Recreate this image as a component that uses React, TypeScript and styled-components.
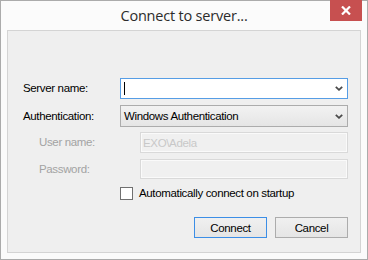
import React from "react";
import styled, { createGlobalStyle } from "styled-components";

const Global = createGlobalStyle`
  html, body { margin: 0; padding: 0; background: #ffffff; }
  * { box-sizing: border-box; }
`;

const Window = styled.div`
  width: 368px;
  height: 260px;
  border: 1px solid #ababab;
  background: #fbfbfb;
  display: flex;
  flex-direction: column;
  font-family: "Liberation Sans", Arial, sans-serif;
  font-size: 11.5px;
  letter-spacing: -0.35px;
  color: #000;
`;

const TitleBar = styled.div`
  height: 29px;
  display: grid;
  grid-template-columns: 1fr auto 1fr;
  align-items: start;
`;

const Title = styled.div`
  grid-column: 2;
  font-family: "Open Sans", "Noto Sans", sans-serif;
  font-size: 14.5px;
  letter-spacing: -0.2px;
  color: #2b2b2b;
  padding-top: 5px;
  line-height: 20px;
`;

const CloseButton = styled.div`
  grid-column: 3;
  justify-self: end;
  margin-right: 5px;
  margin-top: -1px;
  width: 32px;
  height: 21px;
  background: #c75050;
  display: flex;
  align-items: center;
  justify-content: center;
`;

const Panel = styled.div`
  margin: 0 6px 6px 6px;
  flex: 1;
  border: 1px solid #d4d4d4;
  background: #efefef;
  padding: 47px 12px 0 15px;
  display: flex;
  flex-direction: column;
`;

const Row = styled.div<{ $h: number; $mt?: number }>`
  display: flex;
  align-items: center;
  height: ${(p) => p.$h}px;
  margin-top: ${(p) => p.$mt ?? 0}px;
`;

const Label = styled.div<{ $disabled?: boolean }>`
  width: ${(p) => (p.$disabled ? 101 : 97)}px;
  padding-left: ${(p) => (p.$disabled ? 16 : 0)}px;
  color: ${(p) => (p.$disabled ? "#a3a3a3" : "#000")};
  margin-top: -1px;
`;

const TextInput = styled.div<{ $disabled?: boolean; $focused?: boolean }>`
  flex: 1;
  height: 100%;
  margin-left: ${(p) => (p.$disabled ? 16 : 0)}px;
  border: 1px solid
    ${(p) => (p.$focused ? "#569de5" : p.$disabled ? "#d9d9d9" : "#abadb3")};
  background: ${(p) => (p.$disabled ? "#f0f0f0" : "#ffffff")};
  box-shadow: ${(p) => (p.$disabled ? "inset 0 0 0 1px #fafafa" : "none")};
  display: flex;
  align-items: center;
  padding: 0 4px 0 2px;
  color: #c8c8c8;
`;

const Caret = styled.span`
  display: block;
  width: 1px;
  height: 13px;
  background: #000;
  margin-left: 1px;
`;

const Spacer = styled.span`
  flex: 1;
`;

const Combo = styled.div`
  flex: 1;
  height: 100%;
  border: 1px solid #acacac;
  background: linear-gradient(#f2f2f2, #e5e5e5);
  display: flex;
  align-items: center;
  padding: 0 4px 0 3px;
`;

const CheckRow = styled.label`
  display: flex;
  align-items: center;
  margin-left: 97px;
  margin-top: 7px;
  height: 14px;
  gap: 6px;
`;

const Box = styled.span`
  width: 13px;
  height: 13px;
  border: 1px solid #707070;
  background: #ffffff;
`;

const ButtonRow = styled.div`
  display: flex;
  justify-content: flex-end;
  gap: 8px;
  margin-top: 17px;
`;

const Button = styled.div<{ $default?: boolean }>`
  width: 73px;
  height: 21px;
  border: 1px solid ${(p) => (p.$default ? "#3c8ee6" : "#acacac")};
  background: linear-gradient(#f0f0f0, #e5e5e5);
  display: flex;
  align-items: center;
  justify-content: center;
  color: #000;
`;

const Chevron = () => (
  <svg width="8" height="5" viewBox="0 0 8 5">
    <path d="M0.8 0.8 L4 3.8 L7.2 0.8" fill="none" stroke="#4a4a4a" strokeWidth="1.8" />
  </svg>
);

const CloseIcon = () => (
  <svg width="10" height="9" viewBox="0 0 10 9">
    <path d="M1 0.5 L9 8.5 M9 0.5 L1 8.5" stroke="#ffffff" strokeWidth="2.2" />
  </svg>
);

export default function App() {
  return (
    <>
      <Global />
      <Window>
        <TitleBar>
          <Title>Connect to server...</Title>
          <CloseButton>
            <CloseIcon />
          </CloseButton>
        </TitleBar>
        <Panel>
          <Row $h={21}>
            <Label>Server name:</Label>
            <TextInput $focused>
              <Caret />
              <Spacer />
              <Chevron />
            </TextInput>
          </Row>
          <Row $h={22} $mt={6}>
            <Label>Authentication:</Label>
            <Combo>
              <span>Windows Authentication</span>
              <Spacer />
              <Chevron />
            </Combo>
          </Row>
          <Row $h={21} $mt={5}>
            <Label $disabled>User name:</Label>
            <TextInput $disabled>EXO\Adela</TextInput>
          </Row>
          <Row $h={20} $mt={6}>
            <Label $disabled>Password:</Label>
            <TextInput $disabled />
          </Row>
          <CheckRow>
            <Box />
            <span>Automatically connect on startup</span>
          </CheckRow>
          <ButtonRow>
            <Button $default>Connect</Button>
            <Button>Cancel</Button>
          </ButtonRow>
        </Panel>
      </Window>
    </>
  );
}
